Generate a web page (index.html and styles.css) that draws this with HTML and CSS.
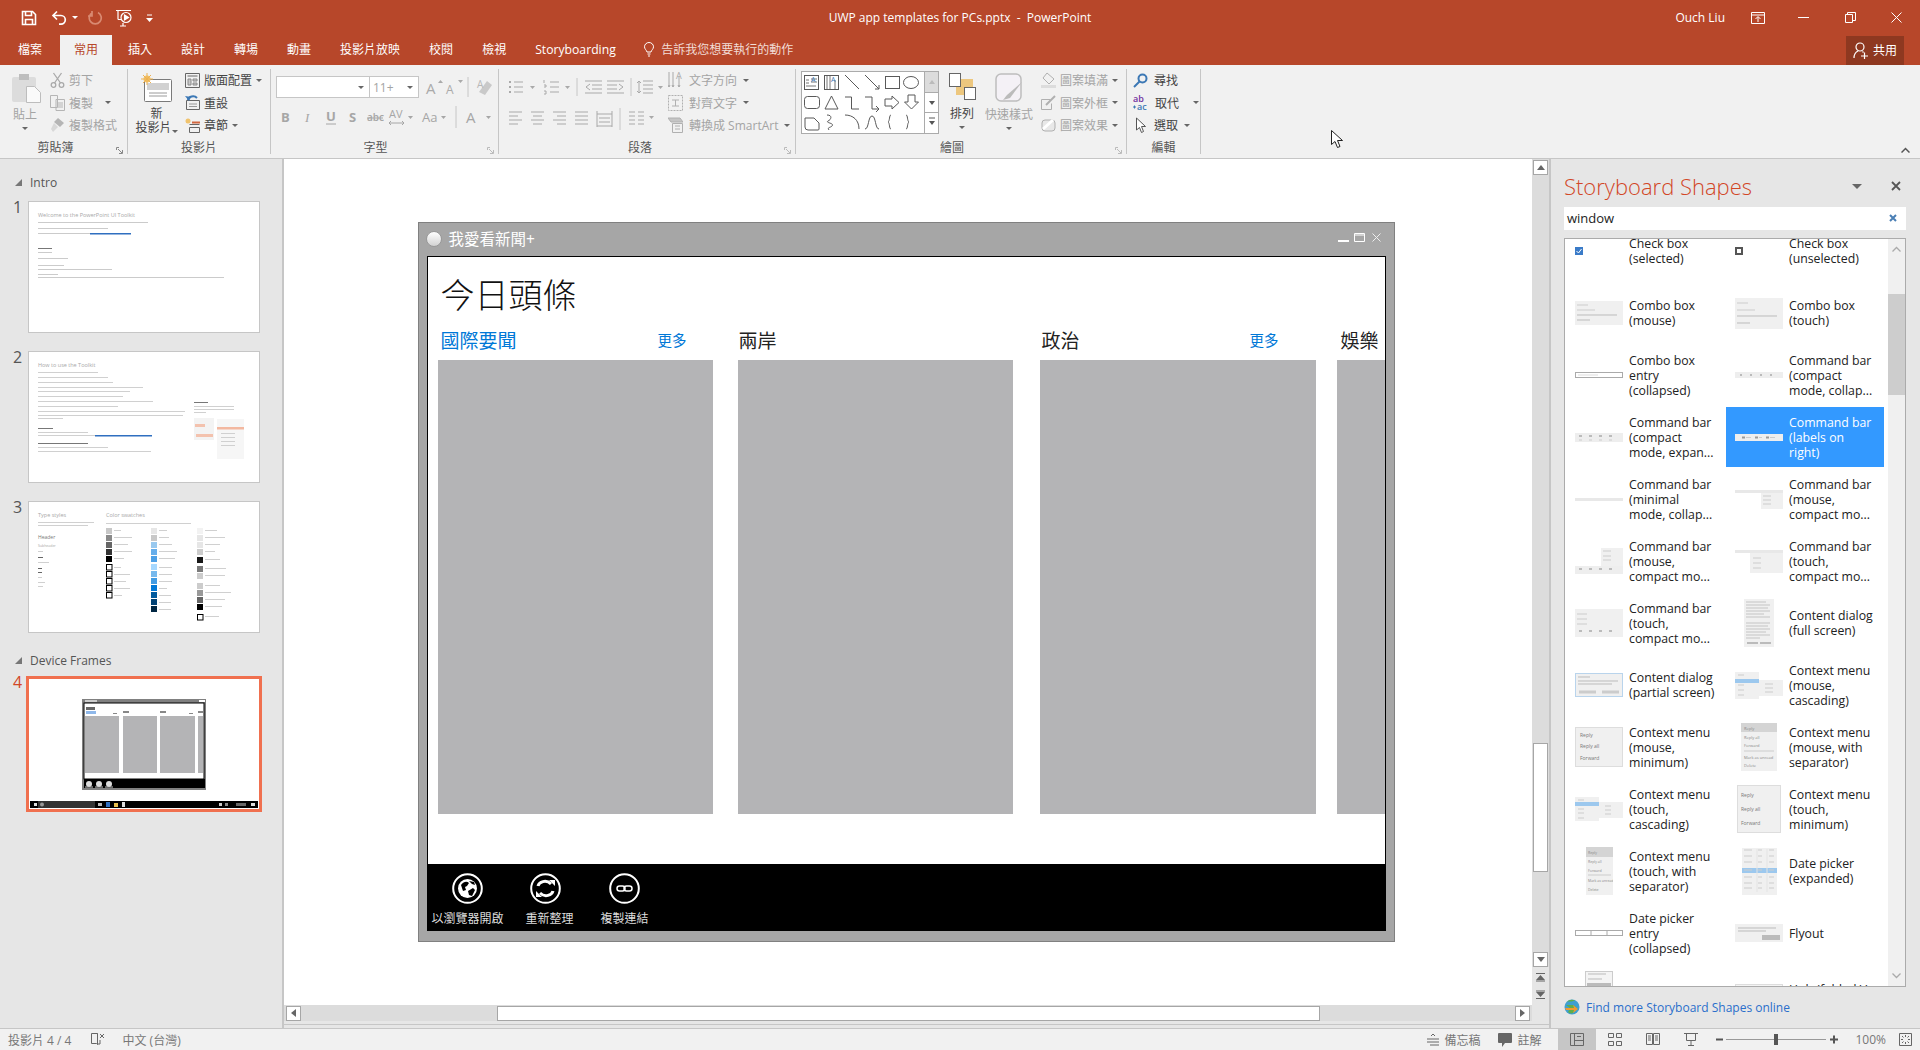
FILE: index.html
```html
<!doctype html>
<html lang="zh-Hant">
<head>
<meta charset="utf-8">
<title>UWP app templates for PCs.pptx - PowerPoint</title>
<link rel="stylesheet" href="styles.css">
</head>
<body>
<div class="app">

<!-- title bar -->
<div class="titlebar">
	<div class="qat">
		<svg width="16" height="16" viewBox="0 0 16 16" fill="none" stroke="#fff" stroke-width="1.6"><path d="M1.5 1.5h10l3 3v10h-13z"/><path d="M4.500 1.500v4h6v-4M4.500 14.500v-5h7v5"/></svg>
		<svg class="qat-undo" width="17" height="16" viewBox="0 0 17 16" fill="none" stroke="#fff" stroke-width="1.7"><path d="M6 1.500L2 5.500l4 4M2 5.500h8a4.300 4.300 0 0 1 0 8.600H8"/></svg>
		<span class="caret caret-white"></span>
		<svg class="qat-redo" width="15" height="16" viewBox="0 0 15 16" fill="none" stroke="#d98a72" stroke-width="1.700"><path d="M10 2.500a6 6 0 1 1-5.500 0M4 1v5H0"/></svg>
		<svg class="qat-show" width="17" height="18" viewBox="0 0 17 18" fill="none" stroke="#fff" stroke-width="1.200"><path d="M0 1.500h15M2 1.500v9M2 10.500h3M7 14v3M4 17h6"/><circle cx="10" cy="8.500" r="5"/><path d="M8.500 6l4 2.500-4 2.500z" fill="#fff"/></svg>
		<svg class="qat-more" width="7" height="8" viewBox="0 0 7 8"><path d="M1 1h5" stroke="#fff"/><path d="M0 4h7L3.500 8z" fill="#fff"/></svg>
	</div>
	<div class="doc-title">UWP app templates for PCs.pptx &nbsp;-&nbsp; PowerPoint</div>
	<div class="win-controls">
		<span class="user">Ouch Liu</span>
		<svg class="wc-display" width="14" height="12" viewBox="0 0 14 12" fill="none" stroke="#fff"><path d="M.5.500h13v11H.500zM.5 3h13M7 10V5M4.500 7L7 4.500 9.500 7"/></svg>
		<svg class="wc-min" width="11" height="1" viewBox="0 0 11 1"><path d="M0 .5h11" stroke="#fff"/></svg>
		<svg class="wc-restore" width="11" height="11" viewBox="0 0 11 11" fill="none" stroke="#fff"><path d="M.5 2.500h7v8h-7zM2.500 2.500v-2h8v8h-3"/></svg>
		<svg class="wc-close" width="11" height="11" viewBox="0 0 11 11" stroke="#fff"><path d="M.5.500l10 10M10.500.500l-10 10"/></svg>
	</div>
</div>

<!-- tabs -->
<div class="tabs">
	<a class="tab tab-file">檔案</a>
	<a class="tab tab-active">常用</a>
	<a class="tab">插入</a>
	<a class="tab">設計</a>
	<a class="tab">轉場</a>
	<a class="tab">動畫</a>
	<a class="tab">投影片放映</a>
	<a class="tab">校閱</a>
	<a class="tab">檢視</a>
	<a class="tab tab-latin">Storyboarding</a>
	<div class="tell-me">
		<svg width="10" height="15" viewBox="0 0 10 15" fill="none" stroke="#fff"><path d="M3 10C2.500 8 .5 7 .5 4.800a4.500 4.300 0 0 1 9 0C9.500 7 7.500 8 7 10zM3.500 12h3M4 14h2"/></svg>
		<span>告訴我您想要執行的動作</span>
	</div>
	<div class="share">
		<svg width="16" height="17" viewBox="0 0 16 17" fill="none" stroke="#fff" stroke-width="1.200"><circle cx="7" cy="5" r="4"/><path d="M1 16c0-4 2-6 4-7M9.500 9.500l1 1M8 14h7M11.500 10.500V17"/></svg>
		<span>共用</span>
	</div>
</div>

<!-- ribbon -->
<div class="ribbon">

	<div class="group group-clip">
		<div class="group-body">
			<div class="big big-paste is-off">
				<svg width="29" height="30" viewBox="0 0 29 30"><rect x="0" y="4" width="24" height="25" rx="2" fill="#dcdcdc"/><rect x="7" y="1" width="10" height="6" fill="#bdbdbd"/><path d="M14.500 13.500h8l6 6v10h-14z" fill="#fafafa" stroke="#bdbdbd"/></svg>
				<span class="big-text">貼上</span>
				<span class="caret"></span>
			</div>
			<div class="smalls">
				<div class="rb is-off"><svg width="15" height="16" viewBox="0 0 15 16" fill="none" stroke="#a9a9a9" stroke-width="1.300"><circle cx="3.500" cy="13" r="2.300"/><circle cx="11.500" cy="13" r="2.300"/><path d="M4.500 11L11.500 1M10.500 11L3.500 1"/></svg><span>剪下</span></div>
				<div class="rb is-off"><svg width="15" height="16" viewBox="0 0 15 16" fill="none" stroke="#b5b5b5"><path d="M.5.500h7v12h-7zM6 4.500h8.500v11H6zM8 8h5M8 10h5M8 12h5"/></svg><span>複製</span><span class="caret caret-wide"></span></div>
				<div class="rb is-off"><svg width="15" height="16" viewBox="0 0 15 16"><path d="M8 1l6 5-4 4-6-5z" fill="#b5b5b5"/><path d="M4 6L1 12l2 3 5-5z" fill="#d8d8d8"/></svg><span>複製格式</span></div>
			</div>
		</div>
		<div class="group-label label-clip">剪貼簿<svg class="launcher" width="7" height="7" viewBox="0 0 7 7" fill="none" stroke="#888"><path d="M.5 3V.5H3M2 2l4 4M6.500 3v3.500H3"/></svg></div>
	</div>

	<div class="group group-slides">
		<div class="group-body">
			<div class="big big-new">
				<svg width="31" height="29" viewBox="0 0 31 29"><rect x="3.500" y="6.500" width="27" height="22" rx="1" fill="#fff" stroke="#7a7a7a"/><rect x="6" y="10" width="22" height="7" fill="#d2d2d2"/><path d="M8 20h18M8 23h18" stroke="#9a9a9a"/><circle cx="6" cy="6" r="3.500" fill="#f0c36d"/><path d="M6 0v12M0 6h12M2 2l8 8M10 2l-8 8" stroke="#eeb14f"/></svg>
				<span class="big-text">新<br>投影片<span class="caret caret-inline"></span></span>
			</div>
			<div class="smalls">
				<div class="rb"><svg width="15" height="15" viewBox="0 0 15 15" fill="none" stroke="#666"><path d="M.5.500h14v14H.500zM2.500 3h10"/><path d="M3 6h3v6H3zM8 6h4v2H8zM8 10h4v2H8z" fill="#c9c9c9" stroke="#8a8a8a"/></svg><span>版面配置</span><span class="caret"></span></div>
				<div class="rb"><svg width="15" height="15" viewBox="0 0 15 15" fill="none"><path d="M1.500 5.500h13v9h-13z" stroke="#666"/><path d="M4 9h8M4 11.500h8" stroke="#999"/><path d="M3 5a5 4 0 0 1 9-2" stroke="#3c78b5" stroke-width="2"/><path d="M0 1l4 5 2-4z" fill="#3c78b5"/></svg><span>重設</span></div>
				<div class="rb"><svg width="15" height="15" viewBox="0 0 15 15" fill="none"><path d="M4.500 6.500h10M4.500 9.500h10M4.500 9.500v5h10v-5" stroke="#666"/><path d="M7 4.500h8" stroke="#d1663f" stroke-width="2"/><circle cx="3" cy="3" r="2.500" fill="#f0c36d"/></svg><span>章節</span><span class="caret"></span></div>
			</div>
		</div>
		<div class="group-label">投影片</div>
	</div>

	<div class="group group-font">
		<div class="group-body group-stack">
			<div class="font-row">
				<div class="combo combo-name"><span class="caret"></span></div>
				<div class="combo combo-size"><span>11+</span><span class="caret"></span></div>
				<svg class="font-tools" width="75" height="22" viewBox="0 0 75 22"><g fill="#aaa" font-family="Open Sans, sans-serif"><text x="7" y="18" font-size="15">A</text><text x="27" y="18" font-size="12">A</text></g><path d="M19 7h5l-2.500-3zM39 4h5l-2.500 3z" fill="#aaa"/><path d="M49 1v20" stroke="#c6c6c6"/><path d="M60 16l8-11 5 4-7 10z" fill="#c9c9c9"/><text x="58" y="12" font-size="10" fill="#b8b8b8" font-family="Open Sans, sans-serif">A</text></svg>
			</div>
			<svg class="font-strip" width="227" height="24" viewBox="0 0 227 24" font-family="Open Sans, sans-serif" fill="#a6a6a6">
				<text x="10" y="17" font-size="13" font-weight="700">B</text>
				<text x="34" y="17" font-size="13" font-style="italic" font-family="Liberation Serif, serif">I</text>
				<text x="55" y="16" font-size="13" font-weight="700">U</text><path d="M55 19h10" stroke="#a6a6a6"/>
				<text x="78" y="17" font-size="13" font-weight="700">S</text>
				<text x="96" y="16" font-size="10" font-weight="600">abc</text><path d="M96 13h16" stroke="#a6a6a6"/>
				<text x="118" y="13" font-size="11">AV</text><path d="M118 18h15M120 16l-2 2 2 2M131 16l2 2-2 2" stroke="#a6a6a6" fill="none"/><path d="M137 11h5l-2.500 3z"/>
				<text x="151" y="17" font-size="13">Aa</text><path d="M170 11h5l-2.500 3z"/>
				<path d="M185 1v22" stroke="#c6c6c6"/>
				<text x="195" y="18" font-size="15">A</text><path d="M215 11h5l-2.500 3z"/>
			</svg>
		</div>
		<div class="group-label label-font">字型<svg class="launcher" width="7" height="7" viewBox="0 0 7 7" fill="none" stroke="#bbb"><path d="M.5 3V.5H3M2 2l4 4M6.500 3v3.500H3"/></svg></div>
	</div>

	<div class="group group-para">
		<div class="group-body">
			<svg class="para-strip" width="166" height="62" viewBox="0 0 166 62" fill="none" stroke="#a9a9a9">
				<path d="M14 7h9M14 12h9M14 17h9"/><path d="M9 7h2M9 12h2M9 17h2" stroke-width="2"/><path d="M30 11h5l-2.500 3z" fill="#a9a9a9" stroke="none"/>
				<path d="M50 7h9M50 12h9M50 17h9M44 5v3M44 10h2v2h-2M44 16h2v3h-2"/><path d="M65 11h5l-2.500 3z" fill="#a9a9a9" stroke="none"/>
				<path d="M77 3v18" stroke="#c6c6c6"/>
				<path d="M85 6h17M92 10h10M92 14h10M85 18h17M90 9l-4 3 4 3"/><path d="M107 6h17M107 10h10M107 14h10M107 18h17M119 9l4 3-4 3"/>
				<path d="M131 3v18" stroke="#c6c6c6"/>
				<path d="M143 6h10M143 10h10M143 14h10M143 18h10M139 6v12M137 8l2-2 2 2M137 16l2 2 2-2"/><path d="M158 11h5l-2.500 3z" fill="#a9a9a9" stroke="none"/>
				<g transform="translate(0,-5)">
					<path d="M9 42h13M9 46h9M9 50h13M9 54h9"/><path d="M31 42h13M33 46h9M31 50h13M33 54h9"/><path d="M53 42h13M57 46h9M53 50h13M57 54h9"/><path d="M75 42h13M75 46h13M75 50h13M75 54h13"/><path d="M97 41v16M112 41v16M97 44h15M99 48h11M99 52h11M97 56h15"/>
					<path d="M120 38v22" stroke="#c6c6c6"/>
					<path d="M129 42h6M129 46h6M129 50h6M129 54h6M138 42h6M138 46h6M138 50h6M138 54h6"/><path d="M149 46h5l-2.500 3z" fill="#a9a9a9" stroke="none"/>
				</g>
			</svg>
			<div class="smalls smalls-para">
				<div class="rb is-off"><svg width="15" height="18" viewBox="0 0 15 18" fill="none" stroke="#a9a9a9"><path d="M1 1v15M5 1v15M11 5v11M0 14l1 2 1-2M4 14l1 2 1-2M10 14l1 2 1-2"/><text x="8" y="8" font-size="9" fill="#a9a9a9" stroke="none" font-family="Open Sans, sans-serif">A</text></svg><span>文字方向</span><span class="caret"></span></div>
				<div class="rb is-off"><svg width="15" height="16" viewBox="0 0 15 16" fill="none" stroke="#b0b0b0" stroke-dasharray="2 1"><path d="M.5.500h14v15H.500z"/><path d="M4 5h7M4 11h7M7.500 5v6" stroke-dasharray="none"/></svg><span>對齊文字</span><span class="caret"></span></div>
				<div class="rb is-off"><svg width="15" height="16" viewBox="0 0 15 16" fill="none" stroke="#b0b0b0"><path d="M0 1h12l3 4H3z" fill="#c5c5c5"/><path d="M4.500 6.500h10v9h-10zM7 9h5M7 12h5"/></svg><span>轉換成 SmartArt</span><span class="caret"></span></div>
			</div>
		</div>
		<div class="group-label label-para">段落<svg class="launcher" width="7" height="7" viewBox="0 0 7 7" fill="none" stroke="#bbb"><path d="M.5 3V.5H3M2 2l4 4M6.500 3v3.500H3"/></svg></div>
	</div>

	<div class="group group-draw">
		<div class="group-body">
			<svg class="gallery" width="138" height="63" viewBox="0 0 138 63" fill="none" stroke="#595959">
				<rect x=".5" y=".5" width="137" height="62" fill="#fff" stroke="#ababab"/>
				<path d="M123.500 1v61" stroke="#ababab"/>
				<rect x="124" y="1" width="13" height="20" fill="#dcdcdc" stroke="none"/>
				<path d="M124 21.500h13M124 41.500h13" stroke="#ababab"/>
				<path d="M128 13h6l-3-4z" fill="#bbb" stroke="none"/><path d="M128 30h6l-3 4z" fill="#555" stroke="none"/><path d="M128 50h6l-3 4z" fill="#555" stroke="none"/><path d="M128 47h6"/>
				<rect x="3.500" y="4.500" width="14" height="14"/><path d="M5 9h3M5 12h3M5 15h10M10 8h6M10 11h6" stroke="#777"/><text x="10" y="11" font-size="7" fill="#3c78b5" stroke="none" font-family="Open Sans, sans-serif">A</text>
				<rect x="23.500" y="4.500" width="14" height="14"/><path d="M26 5v13M29 5v13M34 9v9" stroke="#777"/><text x="30" y="11" font-size="7" fill="#3c78b5" stroke="none" font-family="Open Sans, sans-serif">A</text>
				<path d="M44 4l14 14"/><path d="M64 4l14 14M78 18v-4M78 18h-4"/>
				<rect x="84.500" y="5.500" width="14" height="12"/><ellipse cx="110" cy="11.500" rx="7.500" ry="6"/>
				<rect x="3.500" y="25.500" width="15" height="12" rx="3"/><path d="M30.500 25l6.500 13H24z"/><path d="M44 26h6.500v12H58"/><path d="M64 26h7v12h7M75 35l3 3-3 3"/>
				<path d="M84 28h7v-3l7 6.500-7 6.500v-3h-7z"/><path d="M107 24v7h-3.500l7 7 7-7H114v-7z"/>
				<path d="M4 47h9l5 5v6a1 1 0 0 1-1 1H7a3 3 0 0 1-3-3z"/><path d="M26 44c6 0 4 5 1 6-3 2 7 2 4 5-2 2-5 1-3 4" /><path d="M44 44c8 0 14 5 14 14"/><path d="M64 58c4 0 3-13 7-13s3 13 7 13"/>
				<path d="M90 44c-2 0-1 6-3 7 2 1 1 7 3 7M105 44c2 0 1 6 3 7-2 1-1 7-3 7"/>
			</svg>
			<div class="big big-arrange">
				<svg width="27" height="27" viewBox="0 0 27 27"><rect x="7" y="6" width="17" height="16" fill="#edc77e"/><rect x=".5" y=".5" width="11" height="13" fill="#fff" stroke="#666"/><rect x="15.500" y="14.500" width="11" height="12" fill="#fff" stroke="#666"/></svg>
				<span class="big-text">排列</span>
				<span class="caret"></span>
			</div>
			<div class="big big-style is-off">
				<svg width="28" height="30" viewBox="0 0 28 30" fill="none"><rect x="1" y="1" width="25" height="27" rx="5" fill="#f4f1f6" stroke="#bdbdbd" stroke-width="1.500"/><path d="M27 9L12 22l-4 5 7-2z" fill="#bbb"/></svg>
				<span class="big-text">快速樣式</span>
				<span class="caret"></span>
			</div>
			<div class="smalls smalls-draw">
				<div class="rb is-off"><svg width="15" height="16" viewBox="0 0 15 16" fill="none" stroke="#b0b0b0"><path d="M6 1l7 6-5 5-6-6z"/><rect x="0" y="13" width="15" height="3" fill="#dcdcdc" stroke="none"/></svg><span>圖案填滿</span><span class="caret"></span></div>
				<div class="rb is-off"><svg width="15" height="16" viewBox="0 0 15 16" fill="none" stroke="#b0b0b0"><path d="M.5 4.500h9M.5 4.500v10h10v-6"/><path d="M5 10l9-9" stroke-width="2"/></svg><span>圖案外框</span><span class="caret"></span></div>
				<div class="rb is-off"><svg width="15" height="16" viewBox="0 0 15 16"><rect x="1" y="3" width="13" height="11" rx="3" fill="#e8e8e8" stroke="#b0b0b0"/><path d="M2 12l10-9" stroke="#fff" stroke-width="3"/></svg><span>圖案效果</span><span class="caret"></span></div>
			</div>
		</div>
		<div class="group-label label-draw">繪圖<svg class="launcher" width="7" height="7" viewBox="0 0 7 7" fill="none" stroke="#bbb"><path d="M.5 3V.5H3M2 2l4 4M6.500 3v3.500H3"/></svg></div>
	</div>

	<div class="group group-edit">
		<div class="group-body">
			<div class="smalls smalls-edit">
				<div class="rb"><svg width="15" height="15" viewBox="0 0 15 15" fill="none" stroke="#3c78b5" stroke-width="2"><circle cx="9.500" cy="5.500" r="4"/><path d="M6.500 8.500L1 14"/></svg><span>尋找</span></div>
				<div class="rb"><svg width="16" height="16" viewBox="0 0 16 16" font-family="Open Sans, sans-serif" font-size="9"><text x="0" y="7" fill="#7030a0" font-weight="600">ab</text><text x="4" y="15" fill="#3c78b5" font-weight="600">ac</text><path d="M0 12h3M1.500 10.500v3" stroke="#3c78b5"/></svg><span>取代</span><span class="caret caret-wide"></span></div>
				<div class="rb"><svg width="15" height="17" viewBox="0 0 15 17"><path d="M3.500 1v12l3-2.500 2 5 2-1-2-5h4z" fill="#fff" stroke="#555"/></svg><span>選取</span><span class="caret"></span></div>
			</div>
		</div>
		<div class="group-label">編輯</div>
	</div>

	<svg class="cursor" width="13" height="18" viewBox="0 0 13 18"><path d="M.5.500v14l3.500-3 2.500 6 2.500-1-2.500-6h5z" fill="#fff" stroke="#222"/></svg>
	<svg class="collapse" width="9" height="6" viewBox="0 0 9 6" fill="none" stroke="#555" stroke-width="1.500"><path d="M.5 5.500l4-4 4 4"/></svg>
</div>

<!-- main area -->
<div class="main">

	<div class="slides-panel">
		<div class="sec"><span class="sec-tri"></span>Intro</div>
		<div class="thumb-row">
			<span class="num">1</span>
			<div class="slide-thumb">
				<svg width="230" height="130" viewBox="0 0 230 130" fill="#cbcbcb">
					<text x="9" y="15" font-size="5.500" fill="#a8a8a8" font-family="Open Sans, sans-serif">Welcome to the PowerPoint UI Toolkit</text>
					<rect x="9" y="20" width="110" height="1"/><rect x="9" y="26" width="70" height="1"/><rect x="9" y="31" width="52" height="1"/><rect x="61" y="31" width="41" height="1.500" fill="#2f6fc0"/>
					<rect x="9" y="46" width="14" height="1" fill="#777"/><rect x="9" y="50" width="14" height="1"/><rect x="9" y="56" width="30" height="1"/><rect x="9" y="63" width="26" height="1"/><rect x="9" y="67" width="74" height="1"/><rect x="9" y="72" width="20" height="1"/><rect x="9" y="75" width="186" height="1"/>
				</svg>
			</div>
		</div>
		<div class="thumb-row">
			<span class="num">2</span>
			<div class="slide-thumb">
				<svg width="230" height="130" viewBox="0 0 230 130" fill="#d0d0d0">
					<text x="9" y="15" font-size="5.500" fill="#a8a8a8" font-family="Open Sans, sans-serif">How to use the Toolkit</text>
					<rect x="9" y="20" width="60" height="1"/><rect x="9" y="25" width="70" height="1"/><rect x="9" y="30" width="75" height="1"/><rect x="9" y="35" width="105" height="1"/><rect x="9" y="39" width="92" height="1"/><rect x="9" y="44" width="85" height="1"/><rect x="9" y="49" width="115" height="1"/><rect x="9" y="54" width="80" height="1"/><rect x="9" y="59" width="147" height="1"/><rect x="9" y="63" width="145" height="1"/><rect x="9" y="66" width="25" height="1"/>
					<rect x="9" y="76" width="15" height="1" fill="#777"/><rect x="9" y="80" width="50" height="1"/><rect x="9" y="83" width="57" height="1"/><rect x="66" y="83" width="57" height="1.500" fill="#2f6fc0"/><rect x="9" y="91" width="50" height="1" fill="#777"/><rect x="9" y="95" width="70" height="1"/><rect x="9" y="99" width="113" height="1"/>
					<rect x="165" y="50" width="14" height="1" fill="#777"/><rect x="165" y="54" width="40" height="1"/><rect x="165" y="57" width="40" height="1"/><rect x="165" y="60" width="12" height="1"/>
					<rect x="165" y="66" width="20" height="22" fill="#f3f3f3"/><rect x="166" y="72" width="10" height="3" fill="#f3c2ae"/><rect x="167" y="82" width="17" height="3" fill="#f3c2ae"/>
					<rect x="188" y="67" width="27" height="40" fill="#f6f6f6"/><rect x="188" y="75" width="27" height="2.500" fill="#f3b8a0"/><rect x="192" y="81" width="14" height="1"/><rect x="192" y="85" width="14" height="1"/><rect x="192" y="89" width="14" height="1"/><rect x="192" y="93" width="14" height="1"/>
				</svg>
			</div>
		</div>
		<div class="thumb-row">
			<span class="num">3</span>
			<div class="slide-thumb">
				<svg width="230" height="130" viewBox="0 0 230 130" fill="#d0d0d0">
					<g font-family="Open Sans, sans-serif" fill="#a8a8a8"><text x="9" y="15" font-size="5.500">Type styles</text><text x="77" y="15" font-size="5.500">Color swatches</text><text x="9" y="37" font-size="5" fill="#777">Header</text><text x="9" y="45" font-size="3.500">Subheader</text></g>
					<rect x="9" y="20" width="56" height="1"/><rect x="9" y="23" width="50" height="1"/><rect x="77" y="21" width="85" height="1"/>
					<rect x="9" y="49" width="5" height="1"/><rect x="9" y="55" width="5" height="1" fill="#666"/><rect x="9" y="60" width="11" height="1"/><rect x="9" y="66" width="4" height="1" fill="#666"/><rect x="9" y="70" width="4" height="1" fill="#666"/><rect x="9" y="75" width="4" height="1"/><rect x="9" y="80" width="7" height="1"/><rect x="9" y="84" width="5" height="1"/>
					<rect x="77" y="26" width="6" height="6" fill="#c8c8c8"/><rect x="77" y="33" width="6" height="6" fill="#8a8a8a"/><rect x="77" y="40" width="6" height="6" fill="#666"/><rect x="77" y="47" width="6" height="6" fill="#333"/><rect x="77" y="54" width="6" height="6" fill="#000"/>
					<g fill="#fff" stroke="#000"><rect x="77.500" y="62.500" width="5.500" height="5.500"/><rect x="77.500" y="69.500" width="5.500" height="5.500"/><rect x="77.500" y="76.500" width="5.500" height="5.500"/><rect x="77.500" y="83.500" width="5.500" height="5.500"/><rect x="77.500" y="90.500" width="5.500" height="5.500"/></g>
					<rect x="85" y="28" width="7" height="1"/><rect x="85" y="35" width="18" height="1"/><rect x="85" y="42" width="14" height="1"/><rect x="85" y="49" width="18" height="1"/><rect x="85" y="56" width="10" height="1"/><rect x="85" y="65" width="7" height="1"/><rect x="85" y="72" width="16" height="1"/><rect x="85" y="79" width="12" height="1"/><rect x="85" y="86" width="16" height="1"/><rect x="85" y="93" width="8" height="1"/>
					<rect x="122" y="26" width="6" height="6" fill="#e6e6e6"/><rect x="122" y="33" width="6" height="6" fill="#c8c8c8"/><rect x="122" y="40" width="6" height="6" fill="#99c9ef"/><rect x="122" y="47" width="6" height="6" fill="#66aeeb"/><rect x="122" y="54" width="6" height="6" fill="#4da0e6"/>
					<rect x="122" y="62" width="6" height="6" fill="#a6d8ff"/><rect x="122" y="69" width="6" height="6" fill="#76b9ed"/><rect x="122" y="76" width="6" height="6" fill="#429ce3"/><rect x="122" y="83" width="6" height="6" fill="#0078d7"/><rect x="122" y="90" width="6" height="6" fill="#005a9e"/><rect x="122" y="97" width="6" height="6" fill="#004275"/><rect x="122" y="104" width="6" height="6" fill="#002642"/>
					<rect x="130" y="28" width="8" height="1"/><rect x="130" y="35" width="10" height="1"/><rect x="130" y="42" width="13" height="1"/><rect x="130" y="49" width="18" height="1"/><rect x="130" y="56" width="16" height="1"/><rect x="130" y="65" width="13" height="1"/><rect x="130" y="72" width="13" height="1"/><rect x="130" y="79" width="13" height="1"/><rect x="130" y="86" width="8" height="1"/><rect x="130" y="93" width="12" height="1"/><rect x="130" y="100" width="12" height="1"/><rect x="130" y="107" width="12" height="1"/>
					<rect x="168" y="26" width="6" height="6" fill="#f2f2f2"/><rect x="168" y="33" width="6" height="6" fill="#e6e6e6"/><rect x="168" y="40" width="6" height="6" fill="#e6e6e6"/><rect x="168" y="47" width="6" height="6" fill="#ccc"/><rect x="168" y="55" width="6" height="6" fill="#171717"/><rect x="168" y="64" width="6" height="6" fill="#7a7a7a"/><rect x="168" y="71" width="6" height="6" fill="#ccc"/><rect x="168" y="81" width="6" height="6" fill="#ccc"/><rect x="168" y="88" width="6" height="6" fill="#999"/><rect x="168" y="95" width="6" height="6" fill="#666"/><rect x="168" y="102" width="6" height="6" fill="#000"/><rect x="168.500" y="112.500" width="5.500" height="5.500" fill="#fff" stroke="#000"/>
					<rect x="176" y="28" width="12" height="1"/><rect x="176" y="35" width="20" height="1"/><rect x="176" y="42" width="15" height="1"/><rect x="176" y="49" width="10" height="1"/><rect x="176" y="57" width="15" height="1"/><rect x="176" y="66" width="21" height="1"/><rect x="176" y="73" width="20" height="1"/><rect x="176" y="83" width="15" height="1"/><rect x="176" y="90" width="26" height="1"/><rect x="176" y="97" width="20" height="1"/><rect x="176" y="104" width="17" height="1"/><rect x="176" y="114" width="14" height="1"/>
				</svg>
			</div>
		</div>
		<div class="sec sec-device"><span class="sec-tri"></span>Device Frames</div>
		<div class="thumb-row thumb-row-active">
			<span class="num num-active">4</span>
			<div class="slide-thumb slide-thumb-active">
				<svg width="230" height="130" viewBox="0 0 230 130">
					<rect x="53" y="20" width="124" height="91" fill="#808080"/>
					<rect x="55" y="24" width="120" height="76" fill="#fff" stroke="#000"/>
					<rect x="55" y="100" width="121" height="9" fill="#000"/>
					<rect x="56" y="37" width="34" height="57" fill="#b4b4b6"/><rect x="94" y="37" width="34" height="57" fill="#b4b4b6"/><rect x="131" y="37" width="35" height="57" fill="#b4b4b6"/><rect x="169" y="37" width="5" height="57" fill="#b4b4b6"/>
					<rect x="57" y="28" width="9" height="3" fill="#666"/><rect x="57" y="32" width="10" height="3" fill="#8fb8ea"/><rect x="94" y="32" width="6" height="2" fill="#888"/><rect x="131" y="32" width="6" height="2" fill="#888"/><rect x="169" y="32" width="5" height="2" fill="#888"/><rect x="84" y="34" width="4" height="1" fill="#888"/><rect x="160" y="34" width="4" height="1" fill="#888"/>
					<circle cx="60" cy="105" r="3" fill="#ddd"/><circle cx="70" cy="105" r="3" fill="#ddd"/><circle cx="80" cy="105" r="3" fill="#ddd"/><path d="M56 108h8M66 108h8M76 108h8" stroke="#ccc"/>
					<rect x="56" y="21" width="12" height="2" fill="#ccc"/><rect x="170" y="21" width="6" height="2" fill="#fff"/>
					<rect x="1" y="122" width="228" height="7" fill="#000"/>
					<rect x="9" y="122" width="57" height="7" fill="#333"/><circle cx="13" cy="125.500" r="2" fill="#999"/><rect x="5" y="124" width="3" height="3" fill="#ddd"/>
					<rect x="69" y="124" width="4" height="3" fill="#bbb"/><rect x="77" y="123" width="4" height="5" fill="#2f6fc0"/><rect x="85" y="124" width="4" height="4" fill="#e8c04e"/><rect x="93" y="123" width="3" height="5" fill="#ddd"/>
					<rect x="190" y="124" width="3" height="3" fill="#ccc"/><rect x="196" y="124" width="3" height="3" fill="#888"/><rect x="207" y="124" width="10" height="3" fill="#666"/><rect x="222" y="124" width="4" height="3" fill="#ddd"/>
				</svg>
			</div>
		</div>
	</div>

	<div class="editor">
		<div class="editor-top">
			<div class="canvas">
				<div class="win">
					<div class="win-title">
						<span class="win-dot"></span>
						<span class="win-name">我愛看新聞+</span>
						<svg class="win-btns" width="43" height="9" viewBox="0 0 43 9" fill="none" stroke="#fff"><path d="M0 8h11" stroke-width="2"/><path d="M16.500.500h10v8h-10zM16.500 2h10" /><path d="M34.500.500l8 8M42.500.500l-8 8" stroke="#eee"/></svg>
					</div>
					<div class="win-body">
						<h1 class="news-title">今日頭條</h1>
						<div class="news-cols">
							<div class="news-col news-col-1">
								<div class="news-head"><span class="head-link">國際要聞</span><span class="more">更多</span></div>
								<div class="tile"></div>
							</div>
							<div class="news-col news-col-2">
								<div class="news-head"><span>兩岸</span></div>
								<div class="tile"></div>
							</div>
							<div class="news-col news-col-3">
								<div class="news-head"><span>政治</span><span class="more">更多</span></div>
								<div class="tile"></div>
							</div>
							<div class="news-col news-col-4">
								<div class="news-head"><span>娛樂</span></div>
								<div class="tile"></div>
							</div>
						</div>
					</div>
					<div class="win-bar">
						<div class="bar-item bar-item-open">
							<svg width="31" height="31" viewBox="0 0 31 31" fill="none" stroke="#fff" stroke-width="2"><circle cx="15.500" cy="15.500" r="14.300"/><circle cx="15.500" cy="15.500" r="9.500" fill="#fff" stroke="none"/><path d="M9 12c3-4 6-4 8-2l-2 3-2 1 1 3-3 1zM16 18l5-3 2 2-3 6-3-1zM17 8l5 1 1 3-3-1z" fill="#000" stroke="none"/></svg>
							<span>以瀏覽器開啟</span>
						</div>
						<div class="bar-item bar-item-reload">
							<svg width="31" height="31" viewBox="0 0 31 31" fill="none" stroke="#fff" stroke-width="2"><circle cx="15.500" cy="15.500" r="14.300"/><path d="M8 13c1-4 8-7 13-2" stroke-width="3"/><path d="M23 18c-1 4-8 7-13 2" stroke-width="3"/><path d="M19 7l6 0 0 6zM12 24l-6 0 0-6z" fill="#fff" stroke="none"/></svg>
							<span>重新整理</span>
						</div>
						<div class="bar-item bar-item-copy">
							<svg width="31" height="31" viewBox="0 0 31 31" fill="none" stroke="#fff" stroke-width="2"><circle cx="15.500" cy="15.500" r="14.300"/><rect x="8" y="13" width="8" height="5" rx="2.500" stroke-width="1.500"/><rect x="15" y="13" width="8" height="5" rx="2.500" stroke-width="1.500"/></svg>
							<span>複製連結</span>
						</div>
					</div>
				</div>
			</div>
			<div class="vscroll">
				<span class="sb-btn"><span class="tri tri-up"></span></span>
				<div class="vtrack"><span class="vthumb"></span></div>
				<span class="sb-btn"><span class="tri tri-down"></span></span>
				<div class="page-btns">
					<svg width="9" height="10" viewBox="0 0 9 10" fill="#666"><path d="M0 1h9v1H0zM4.500 3L9 8H0z"/><rect y="8.500" width="9" height="1"/></svg>
					<svg width="9" height="10" viewBox="0 0 9 10" fill="#666"><path d="M0 .5h9v1H0zM0 2h9L4.500 7zM0 8h9v1H0z"/></svg>
				</div>
			</div>
		</div>
		<div class="hscroll">
			<span class="sb-btn"><span class="tri tri-left"></span></span>
			<div class="htrack"><span class="hthumb"></span></div>
			<span class="sb-btn"><span class="tri tri-right"></span></span>
		</div>
		<div class="editor-foot"></div>
	</div>

	<div class="pane">
		<div class="pane-head">
			<span class="pane-title">Storyboard Shapes</span>
			<span class="pane-caret"></span>
			<svg width="10" height="10" viewBox="0 0 10 10" stroke="#555" stroke-width="1.800"><path d="M1 1l8 8M9 1l-8 8"/></svg>
		</div>
		<div class="pane-search">
			<span>window</span>
			<svg width="8" height="8" viewBox="0 0 8 8" stroke="#4a7fb5" stroke-width="2"><path d="M1 1l6 6M7 1l-6 6"/></svg>
		</div>
		<div class="shape-list">
			<div class="shape-view">
				<div class="shape-grid">
					<div class="shape"><div class="pic"><svg class="pic-start" width="8" height="8" viewBox="0 0 8 8"><rect width="8" height="8" fill="#3a7bc8"/><path d="M1.500 4l2 2 3-4" fill="none" stroke="#fff"/></svg></div><span>Check box<br>(selected)</span></div>
					<div class="shape"><div class="pic"><svg class="pic-start" width="8" height="8" viewBox="0 0 8 8"><rect x="1" y="1" width="6" height="6" fill="#fff" stroke="#555" stroke-width="2"/></svg></div><span>Check box<br>(unselected)</span></div>

					<div class="shape"><div class="pic"><svg width="48" height="24" viewBox="0 0 48 24"><rect width="48" height="24" fill="#f0f0f0"/><path d="M2 4h11M2 9h18" stroke="#ccc"/><path d="M2 14h40M2 19h13" stroke="#bbb"/></svg></div><span>Combo box<br>(mouse)</span></div>
					<div class="shape"><div class="pic"><svg width="48" height="31" viewBox="0 0 48 31"><rect width="48" height="31" fill="#f0f0f0"/><path d="M2 5h11M2 12h18" stroke="#ccc"/><path d="M2 18h40M2 25h13" stroke="#bbb"/></svg></div><span>Combo box<br>(touch)</span></div>

					<div class="shape"><div class="pic"><svg width="48" height="6" viewBox="0 0 48 6"><rect x=".5" y=".5" width="47" height="5" fill="#fff" stroke="#aaa"/><path d="M3 3h20" stroke="#ddd"/></svg></div><span>Combo box<br>entry<br>(collapsed)</span></div>
					<div class="shape"><div class="pic"><svg width="48" height="6" viewBox="0 0 48 6"><rect width="48" height="6" fill="#eee"/><path d="M5 3h2M15 3h2M25 3h2M35 3h2" stroke="#bbb" stroke-width="2"/></svg></div><span>Command bar<br>(compact<br>mode, collap...</span></div>

					<div class="shape"><div class="pic"><svg width="48" height="9" viewBox="0 0 48 9"><rect width="48" height="9" fill="#eee"/><path d="M4 3h3M14 3h3M24 3h3M34 3h3" stroke="#bbb" stroke-width="2"/><path d="M4 7h3M14 7h3M24 7h3M34 7h3" stroke="#ccc"/></svg></div><span>Command bar<br>(compact<br>mode, expan...</span></div>
					<div class="shape shape-on"><div class="pic"><svg width="48" height="7" viewBox="0 0 48 7"><rect width="48" height="7" fill="#eee"/><path d="M7 3.500h3M20 3.500h3M31 3.500h3" stroke="#999" stroke-width="2"/><path d="M11 3.500h5M24 3.500h3M35 3.500h5" stroke="#ccc"/></svg></div><span>Command bar<br>(labels on<br>right)</span></div>

					<div class="shape"><div class="pic"><svg width="48" height="3" viewBox="0 0 48 3"><rect width="48" height="3" fill="#e8e8e8"/></svg></div><span>Command bar<br>(minimal<br>mode, collap...</span></div>
					<div class="shape"><div class="pic"><svg width="48" height="19" viewBox="0 0 48 19"><rect width="48" height="3" fill="#e8e8e8"/><rect x="26" y="3" width="22" height="16" fill="#f0f0f0"/><path d="M28 6h8M28 10h8M28 14h8" stroke="#ccc"/></svg></div><span>Command bar<br>(mouse,<br>compact mo...</span></div>

					<div class="shape"><div class="pic"><svg width="48" height="26" viewBox="0 0 48 26"><rect x="26" width="22" height="18" fill="#f0f0f0"/><path d="M28 3h8M28 8h8M28 12h8" stroke="#ccc"/><rect y="18" width="48" height="8" fill="#eee"/><path d="M4 21h3M14 21h3M24 21h3M34 21h3" stroke="#bbb" stroke-width="2"/></svg></div><span>Command bar<br>(mouse,<br>compact mo...</span></div>
					<div class="shape"><div class="pic"><svg width="48" height="23" viewBox="0 0 48 23"><rect width="48" height="3" fill="#e8e8e8"/><rect x="15" y="3" width="33" height="20" fill="#f0f0f0"/><path d="M18 8h8M18 13h8M18 18h8" stroke="#ccc"/></svg></div><span>Command bar<br>(touch,<br>compact mo...</span></div>

					<div class="shape"><div class="pic"><svg width="48" height="28" viewBox="0 0 48 28"><rect width="48" height="28" fill="#f0f0f0"/><path d="M2 5h10M2 10h10M2 15h10" stroke="#ccc"/><path d="M4 22h3M14 22h3M24 22h3M34 22h3" stroke="#bbb" stroke-width="2"/></svg></div><span>Command bar<br>(touch,<br>compact mo...</span></div>
					<div class="shape"><div class="pic"><svg width="30" height="48" viewBox="0 0 30 48"><rect width="30" height="48" fill="#f0f0f0"/><path d="M2 3h20M2 6h24M2 9h22M2 12h24M2 15h18M2 18h24M2 24h24M2 27h22M2 30h24M2 33h20M2 36h24M2 39h14" stroke="#c4c4c4"/><path d="M3 44h11M16 44h11" stroke="#bbb" stroke-width="2"/></svg></div><span>Content dialog<br>(full screen)</span></div>

					<div class="shape"><div class="pic"><svg width="48" height="24" viewBox="0 0 48 24"><rect x=".5" y=".5" width="47" height="23" fill="#f0f0f0" stroke="#b9d4ec"/><path d="M3 4h12M3 8h40M3 11h34" stroke="#bbb"/><path d="M4 19h17M27 19h17" stroke="#ccc" stroke-width="3"/></svg></div><span>Content dialog<br>(partial screen)</span></div>
					<div class="shape"><div class="pic"><svg width="48" height="27" viewBox="0 0 48 27"><rect width="24" height="27" fill="#f0f0f0"/><rect y="7" width="24" height="4" fill="#9cc8ee"/><rect x="24" y="8" width="24" height="16" fill="#f0f0f0"/><path d="M3 3h6M3 13h6M3 18h6M3 23h6M30 12h8M30 16h8M30 20h8" stroke="#ccc"/></svg></div><span>Context menu<br>(mouse,<br>cascading)</span></div>

					<div class="shape"><div class="pic"><svg width="48" height="40" viewBox="0 0 48 40" font-family="Open Sans, sans-serif" font-size="5" fill="#777"><rect x=".5" y=".5" width="47" height="39" fill="#f0f0f0" stroke="#ddd"/><text x="5" y="10" fill="#777">Reply</text><text x="5" y="21" fill="#777">Reply all</text><text x="5" y="33" fill="#777">Forward</text></svg></div><span>Context menu<br>(mouse,<br>minimum)</span></div>
					<div class="shape"><div class="pic"><svg width="36" height="48" viewBox="0 0 36 48" font-family="Open Sans, sans-serif" font-size="4" fill="#888"><rect width="36" height="48" fill="#f0f0f0"/><rect width="36" height="9" fill="#d4d4d4"/><text x="3" y="7">Reply</text><text x="3" y="16">Reply all</text><text x="3" y="24">Forward</text><path d="M3 28h30" stroke="#ccc"/><text x="3" y="36">Mark as unread</text><text x="3" y="44">Delete</text></svg></div><span>Context menu<br>(mouse, with<br>separator)</span></div>

					<div class="shape"><div class="pic"><svg width="48" height="24" viewBox="0 0 48 24"><rect width="24" height="24" fill="#f0f0f0"/><rect y="5" width="24" height="4" fill="#9cc8ee"/><rect x="24" y="5" width="24" height="16" fill="#f0f0f0"/><path d="M3 3h6M3 12h6M3 16h6M3 21h6M30 9h6M30 13h6M30 17h6" stroke="#ccc"/></svg></div><span>Context menu<br>(touch,<br>cascading)</span></div>
					<div class="shape"><div class="pic"><svg width="44" height="48" viewBox="0 0 44 48" font-family="Open Sans, sans-serif" font-size="5" fill="#777"><rect x=".5" y=".5" width="43" height="47" fill="#f0f0f0" stroke="#ddd"/><text x="4" y="12">Reply</text><text x="4" y="26">Reply all</text><text x="4" y="40">Forward</text></svg></div><span>Context menu<br>(touch,<br>minimum)</span></div>

					<div class="shape"><div class="pic"><svg width="27" height="48" viewBox="0 0 27 48" font-family="Open Sans, sans-serif" font-size="3.500" fill="#888"><rect width="27" height="48" fill="#f0f0f0"/><rect width="27" height="10" fill="#d4d4d4"/><text x="2" y="7">Reply</text><text x="2" y="16">Reply all</text><text x="2" y="25">Forward</text><path d="M2 28h23" stroke="#ccc"/><text x="2" y="35">Mark as unread</text><text x="2" y="44">Delete</text></svg></div><span>Context menu<br>(touch, with<br>separator)</span></div>
					<div class="shape"><div class="pic"><svg width="35" height="47" viewBox="0 0 35 47"><rect width="35" height="47" fill="#f0f0f0"/><rect y="20" width="35" height="5" fill="#9cc8ee"/><path d="M2 2h8M16 2h4M27 2h5M2 8h8M16 8h4M27 8h5M2 14h8M16 14h4M27 14h5M2 22h8M16 22h4M27 22h5M2 29h8M16 29h4M27 29h5M2 35h8M16 35h4M27 35h5M2 40h8M16 40h4M27 40h5" stroke="#ccc"/><path d="M15 1v43M25 1v43" stroke="#e4e4e4"/></svg></div><span>Date picker<br>(expanded)</span></div>

					<div class="shape"><div class="pic"><svg width="48" height="6" viewBox="0 0 48 6"><rect x=".5" y=".5" width="47" height="5" fill="#fff" stroke="#aaa"/><path d="M16 1v4M32 1v4" stroke="#aaa"/></svg></div><span>Date picker<br>entry<br>(collapsed)</span></div>
					<div class="shape"><div class="pic"><svg width="48" height="18" viewBox="0 0 48 18"><rect width="48" height="18" fill="#f0f0f0"/><path d="M3 4h38M3 7h28" stroke="#bbb"/><rect x="27" y="11" width="18" height="5" fill="#bbb"/></svg></div><span>Flyout</span></div>

					<div class="shape"><div class="pic"><svg width="28" height="48" viewBox="0 0 28 48"><rect x=".5" y=".5" width="27" height="47" fill="#f4f4f4" stroke="#ccc"/><path d="M3 3h18M3 8h14" stroke="#bbb"/><rect x="2" y="12" width="24" height="30" fill="#bbb"/></svg></div><span></span></div>
					<div class="shape shape-last"><div class="pic"><svg width="48" height="22" viewBox="0 0 48 22"><rect x=".5" y=".5" width="47" height="21" fill="#f4f4f4" stroke="#ddd"/><path d="M3 3h30" stroke="#9cc8ee"/></svg></div><span>Hub (folded V<br>&nbsp;</span></div>
				</div>
			</div>
			<div class="list-scroll">
				<svg width="9" height="6" viewBox="0 0 9 6" fill="none" stroke="#aaa" stroke-width="1.300"><path d="M.5 5.500l4-4 4 4"/></svg>
				<div class="list-track"><span class="list-thumb"></span></div>
				<svg width="9" height="6" viewBox="0 0 9 6" fill="none" stroke="#aaa" stroke-width="1.300"><path d="M.5.500l4 4 4-4"/></svg>
			</div>
		</div>
		<div class="pane-foot">
			<svg width="16" height="16" viewBox="0 0 16 16"><circle cx="8" cy="8" r="7.500" fill="#3f9fcf"/><path d="M3 2.500a7.500 7.500 0 0 1 8-1c-2 1-5 1-8 1zM2 6h7l4 3-4 5c-2 1-4 0-5-1l2-4z" fill="#5fae4a"/><path d="M1 9h9l-1-3 5 4-5 4 1-3H2z" fill="#f29a2e"/></svg>
			<a class="pane-link">Find more Storyboard Shapes online</a>
		</div>
	</div>
</div>

<!-- status bar -->
<div class="status">
	<div class="status-left">
		<span class="st-slide">投影片 4 / 4</span>
		<svg class="st-book" width="14" height="13" viewBox="0 0 14 13" fill="none" stroke="#666"><path d="M.5.500h6v11l-1-1H.5zM6.500.500v11M9 1l4 4M13 1L9 5"/><path d="M9 7v4H7" /></svg>
		<span class="st-lang">中文 (台灣)</span>
	</div>
	<div class="status-right">
		<span class="st-item">
			<svg width="12" height="13" viewBox="0 0 12 13" fill="none" stroke="#666"><path d="M4 3l2-2 2 2M0 6h12M0 9h12M3 12h9"/></svg>備忘稿
		</span>
		<span class="st-item st-comment">
			<svg width="14" height="14" viewBox="0 0 14 14" fill="#666"><path d="M1 0h12a1 1 0 0 1 1 1v8a1 1 0 0 1-1 1H7l-3 4v-4H1a1 1 0 0 1-1-1V1a1 1 0 0 1 1-1z"/></svg>註解
		</span>
		<span class="st-view st-view-on"><svg width="14" height="13" viewBox="0 0 14 13" fill="none" stroke="#666"><path d="M.5.500h13v12H.500zM4.500.500v12M4.500 7.500h9M7 3.500h4"/></svg></span>
		<span class="st-view"><svg width="14" height="13" viewBox="0 0 14 13" fill="none" stroke="#666"><path d="M.5.500h5v4h-5zM8.500.500h5v4h-5zM.5 8.500h5v4h-5zM8.500 8.500h5v4h-5z"/></svg></span>
		<span class="st-view"><svg width="14" height="13" viewBox="0 0 14 13" fill="none" stroke="#666"><path d="M.5.500h6v11h-6zM7.500.500h6v11h-6zM2 3h3M2 5h3M2 7h3M9 3h3M9 5h3M9 7h3"/></svg></span>
		<span class="st-view"><svg width="14" height="13" viewBox="0 0 14 13" fill="none" stroke="#666"><path d="M0 .5h14M2.500.5v7h9v-7M7 8v4M4 12.500h6"/></svg></span>
		<svg class="st-zoom" width="125" height="13" viewBox="0 0 125 13"><path d="M3 6.500h7" stroke="#555" stroke-width="2"/><path d="M13 6.500h100" stroke="#999"/><rect x="61" y="1" width="4" height="11" fill="#555"/><path d="M117 6.500h8M121 2.500v8" stroke="#555" stroke-width="2"/></svg>
		<span class="st-pct">100%</span>
		<svg class="st-fit" width="13" height="13" viewBox="0 0 13 13" fill="none" stroke="#666"><path d="M.5.500h12v12H.5zM6.500 2v2M6.500 9v2M2 6.500h2M9 6.500h2M3 3l1.500 1.500M10 3L8.500 4.500M3 10l1.500-1.500M10 10L8.500 8.500"/></svg>
	</div>
</div>

</div>
</body>
</html>
```

FILE: styles.css
```css
* {box-sizing:border-box; margin:0; padding:0; }
html, body {height:100%; overflow:hidden; }
body {font:12px "Open Sans","Noto Sans CJK TC",sans-serif; color:#444; background:#f1f1f1; }
svg {display:block; flex-shrink:0; }
.app {display:flex; flex-direction:column; width:1920px; height:1050px; }

/* carets */
.caret {display:inline-block; width:0; height:0; border:3px solid transparent; border-top:3px solid #666; border-bottom:0; margin-left:4px; flex-shrink:0; }
.caret-white {border-top-color:#fff; margin-left:4px; }
.rb .caret {margin-left:0; }
.rb .caret-wide {margin-left:8px; }
.caret-inline {margin-left:3px; vertical-align:middle; }

/* title bar */
.titlebar {display:grid; grid-template-columns:1fr auto 1fr; align-items:center; height:35px; background:#b7472a; color:#fff; }
.qat {display:flex; align-items:center; padding-left:21px; }
.qat-undo {margin-left:14px; }
.qat-redo {margin-left:10px; }
.qat-show {margin-left:13px; }
.qat-more {margin-left:13px; }
.doc-title {font-size:12px; }
.win-controls {display:flex; align-items:center; justify-content:flex-end; }
.user {font-size:12px; }
.wc-display {margin-left:26px; }
.wc-min {margin-left:33px; }
.wc-restore {margin-left:36px; }
.wc-close {margin-left:35px; margin-right:18px; }

/* tabs */
.tabs {display:flex; align-items:center; height:30px; background:#b7472a; color:#fff; }
.tab {display:flex; align-items:center; justify-content:center; height:30px; padding:0 14.5px 2px; }
.tab-file {padding:0 18px 2px 18px; }
.tab-active {padding:0 14px 2px; margin-right:1.500px; background:#f1f1f1; color:#b7472a; }
.tab-latin {font-size:12.200px; }
.tell-me {display:flex; align-items:center; gap:7px; margin-left:14px; padding-bottom:2px; color:#f2ddd6; }
.share {display:flex; align-items:center; gap:4px; height:29px; width:58px; margin-left:auto; margin-right:16px; padding-left:7px; background:#8e3820; }

/* ribbon */
.ribbon {position:relative; display:flex; height:94px; padding-top:4px; background:#f1f1f1; border-bottom:1px solid #c6c6c6; }
.group {display:flex; flex-direction:column; height:85px; border-right:1px solid #c6c6c6; }
.group-clip {width:128px; }
.group-slides {width:143px; }
.group-font {width:228px; }
.group-para {width:297px; }
.group-draw {width:331px; }
.group-edit {width:74px; }
.group-body {display:flex; height:70px; white-space:nowrap; }
.group-stack {flex-direction:column; }
.group-label {position:relative; height:13px; line-height:13px; margin-top:3px; text-align:center; color:#555; }
.label-clip {padding-right:16px; }
.label-font {padding-right:18px; }
.label-para {padding-right:14px; }
.label-draw {padding-right:18px; }
.launcher {position:absolute; right:4px; bottom:0; }
.is-off {color:#a4a4a4; }

.big {display:flex; flex-direction:column; align-items:center; padding-top:4px; }
.big-text {display:block; text-align:center; line-height:14px; margin-top:5px; }
.big .caret {margin:5px 0 0 0; }
.big-paste {width:50px; }
.big-paste svg {margin-left:3px; }
.big-new {width:57px; }
.big-new .big-text {margin-top:5px; color:#444; }
.big-arrange {width:36px; margin-left:5px; }
.big-arrange .big-text {margin-top:7px; }
.big-style {width:48px; margin-left:5px; }
.big-style .big-text {margin-top:5px; }

.smalls {display:flex; flex-direction:column; }
.rb {display:flex; align-items:center; gap:4px; height:22.500px; }
.smalls-para {margin-left:2px; }
.smalls-para .rb {gap:6px; }
.smalls-draw {margin-left:8px; }
.smalls-edit {margin-left:6px; }
.smalls-edit .rb {gap:6px; }

.font-row {display:flex; align-items:center; margin:7px 0 0 5px; }
.combo {display:flex; align-items:center; justify-content:flex-end; height:22px; background:#fff; border:1px solid #c6c6c6; padding-right:5px; }
.combo-name {width:94px; }
.combo-size {width:50px; margin-left:-1px; justify-content:space-between; padding-left:3px; color:#a4a4a4; }
.font-strip {margin-top:7px; }
.para-strip {margin-top:6px; margin-left:1px; }
.gallery {margin:2px 0 0 5px; }

.cursor {position:absolute; left:1331px; top:65px; }
.collapse {position:absolute; left:1901px; top:82px; }

/* main area */
.main {display:flex; height:869px; }

.slides-panel {width:284px; flex-shrink:0; padding-top:15px; background:#e6e6e6; border-right:2px solid #c6c6c6; }
.sec {display:flex; align-items:center; height:16px; padding-left:15px; font-size:12px; color:#555; }
.sec-tri {width:0; height:0; margin-right:8px; border-style:solid; border-width:0 0 7px 7px; border-color:transparent transparent #777 transparent; }
.sec-device {margin-top:19px; }
.thumb-row {display:flex; margin-top:18px; }
.sec + .thumb-row {margin-top:11px; }
.sec-device + .thumb-row {margin-top:8px; }
.num {width:28px; margin-top:-3px; padding-left:13px; font-size:16px; line-height:18px; color:#555; }
.num-active {color:#d24726; }
.slide-thumb {width:232px; height:132px; padding:0; background:#fff; border:1px solid #c6c6c6; }
.slide-thumb-active {width:236px; height:136px; margin-left:-2px; border:3px solid #f0704f; }

.editor {flex:1; display:flex; flex-direction:column; background:#e6e6e6; border-right:2px solid #c6c6c6; }
.editor-top {display:flex; height:846px; }
.canvas {flex:1; display:flex; align-items:center; justify-content:center; padding-right:4px; background:#fff; }

.win {width:977px; height:720px; padding:0 8px; background:#a6a6a6; border:1px solid #808080; }
.win-title {display:flex; align-items:center; height:33px; padding-bottom:2px; color:#fff; }
.win-dot {width:16px; height:16px; margin-left:-1px; border-radius:50%; background:linear-gradient(#fff,#d2d2d2); border:1px solid #999; }
.win-name {margin-left:7px; font-size:15.500px; }
.win-btns {margin-left:auto; margin-top:-2px; margin-right:5px; }
.win-body {height:608px; background:#fff; border:1px solid #000; border-bottom:0; overflow:hidden; }
.news-title {padding:18px 0 0 13px; height:57px; font-size:34px; line-height:40px; font-weight:300; color:#111; }
.news-cols {display:flex; margin:13px 0 0 10px; }
.news-col {flex-shrink:0; width:275px; }
.news-col-1 {margin-right:25px; }
.news-col-2 {margin-right:27px; }
.news-col-3 {width:276px; margin-right:21px; }
.news-head {display:flex; justify-content:space-between; align-items:center; height:27px; padding:0 0 2px 3px; margin-bottom:6px; font-size:19px; color:#222; }
.head-link {color:#0078d7; }
.more {margin-right:26px; font-size:14.500px; color:#0078d7; }
.news-col-3 .more {margin-right:37px; }
.news-col-2 .news-head {padding-left:1px; }
.news-col-3 .news-head {padding-left:2px; }
.news-col-4 .news-head {padding-left:4px; }
.tile {height:454px; background:#b4b4b6; }

.win-bar {display:flex; height:67px; padding:9px 0 0 5px; background:#000; color:#ddd; }
.bar-item {display:flex; flex-direction:column; align-items:center; gap:5px; }
.bar-item-reload {margin-left:22px; }
.bar-item-reload svg {margin-right:9px; }
.bar-item-copy {margin-left:27px; }

.sb-btn {display:flex; align-items:center; justify-content:center; width:15px; height:15px; flex-shrink:0; background:#fff; border:1px solid #a6a6a6; }
.tri {width:0; height:0; border-style:solid; border-color:transparent; }
.tri-up {border-width:0 4px 5px; border-bottom-color:#666; }
.tri-down {border-width:5px 4px 0; border-top-color:#666; }
.tri-left {border-width:4px 5px 4px 0; border-right-color:#666; }
.tri-right {border-width:4px 0 4px 5px; border-left-color:#666; }
.vscroll {display:flex; flex-direction:column; align-items:center; width:17px; padding-top:1px; background:#dcdcdc; }
.vtrack {flex:1; width:15px; }
.vthumb {display:block; width:15px; height:129px; margin-top:568px; background:#fff; border:1px solid #a6a6a6; }
.page-btns {display:flex; flex-direction:column; align-items:center; gap:8px; width:17px; height:38px; padding-top:5px; background:#e6e6e6; }
.hscroll {display:flex; align-items:center; height:16px; margin-right:17px; padding:0 2px; background:#dcdcdc; }
.htrack {flex:1; }
.hthumb {display:block; width:823px; height:15px; margin-left:196px; background:#fff; border:1px solid #a6a6a6; }
.editor-foot {flex:1; border-bottom:1px solid #c6c6c6; margin-bottom:3px; }

/* task pane */
.pane {width:369px; flex-shrink:0; padding-left:13px; background:#e6e6e6; }
.pane-head {display:flex; align-items:center; height:48px; padding-top:6px; }
.pane-title {font-size:22px; font-weight:300; color:#d24726; }
.pane-caret {width:0; height:0; margin:0 29px 0 auto; border-style:solid; border-width:5px 5px 0; border-color:#666 transparent transparent; }
.pane-head svg {margin-right:19px; }
.pane-search {display:flex; align-items:center; justify-content:space-between; width:342px; height:23px; padding:0 9px 2px 3px; font-size:13px; color:#222; background:#fff; }
.shape-list {display:flex; width:342px; height:749px; margin-top:8px; background:#fff; border:1px solid #ababab; overflow:hidden; }
.shape-view {flex:1; overflow:hidden; }
.shape-grid {display:grid; grid-template-columns:160px 158px; grid-auto-rows:62px; margin-top:-19px; padding-left:1px; }
.shape {display:flex; align-items:center; gap:6px; margin:1px 0 2px 0; padding-left:9px; height:60px; font-size:12.300px; line-height:15px; color:#222; }
.shape-on {background:#3399ff; color:#fff; }
.shape-last span {padding-top:4px; }
.pic {display:flex; align-items:center; justify-content:center; width:48px; flex-shrink:0; }
.pic .pic-start {margin-right:auto; }
.shape span {white-space:nowrap; }
.list-scroll {display:flex; flex-direction:column; align-items:center; width:17px; padding:7px 0; background:#f0f0f0; }
.list-track {flex:1; width:17px; }
.list-thumb {display:block; height:101px; margin-top:42px; background:#cdcdcd; }
.pane-foot {display:flex; align-items:center; gap:6px; height:40px; }
.pane-link {font-size:12px; color:#2a6fcb; }

/* status bar */
.status {display:flex; justify-content:space-between; align-items:center; height:22px; background:#f1f1f1; border-top:1px solid #c6c6c6; color:#777; }
.status-left, .status-right {display:flex; align-items:center; height:21px; }
.status-left {padding-left:8px; }
.st-book {margin-left:20px; }
.st-lang {margin-left:17px; }
.st-item {display:flex; align-items:center; gap:5px; }
.st-comment {margin-left:18px; }
.st-view {display:flex; align-items:center; justify-content:center; width:38px; height:21px; }
.st-view-on {margin-left:17px; background:#c6c6c6; }
.st-zoom {margin-left:3px; }
.st-pct {margin-left:17px; }
.st-fit {margin:0 8px 0 13px; }
```
